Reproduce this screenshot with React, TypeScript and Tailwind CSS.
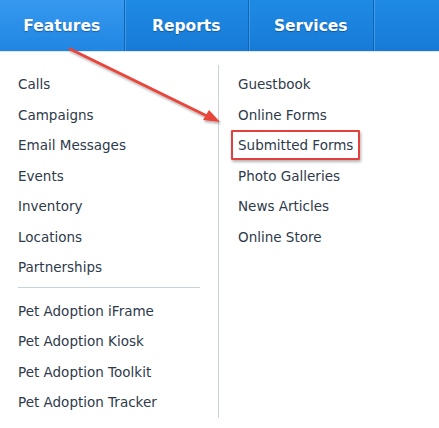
import React from "react";

const leftTop = ["Calls", "Campaigns", "Email Messages", "Events", "Inventory", "Locations", "Partnerships"];
const leftBottom = ["Pet Adoption iFrame", "Pet Adoption Kiosk", "Pet Adoption Toolkit", "Pet Adoption Tracker"];
const right = ["Guestbook", "Online Forms", "Submitted Forms", "Photo Galleries", "News Articles", "Online Store"];

const tabs = ["Features", "Reports", "Services"];

function Item({ label, boxed }: { label: string; boxed?: boolean }) {
  return (
    <li className="flex h-[30.5px] items-center">
      <span
        className={
          boxed
            ? "-ml-[7px] rounded-[1px] border-2 border-[#e2403c] px-[5px] py-[3px] shadow-[1px_2px_3px_rgba(0,0,0,0.3)]"
            : ""
        }
      >
        {label}
      </span>
    </li>
  );
}

export default function App() {
  return (
    <div
      className="relative h-[428px] w-[439px] overflow-hidden bg-white text-[13.5px] text-[#2e3a4b]"
      style={{ fontFamily: "Tahoma, 'DejaVu Sans', sans-serif" }}
    >
      <nav className="flex h-[52px] border-b border-[#dfe6ee] bg-[linear-gradient(180deg,#1f8ae4,#177bd6)]">
        {tabs.map((tab, i) => (
          <div
            key={tab}
            className={
              "flex w-[124.5px] items-center justify-center border-r border-r-[#0d67b8] pt-[3px] text-[15.5px] font-bold text-white [text-shadow:0_1px_1px_rgba(0,40,90,0.45)] " +
              (i === 0
                ? "bg-[linear-gradient(180deg,#3799ef,#1f86e2)]"
                : "shadow-[inset_1px_0_0_rgba(110,180,245,0.45)]")
            }
          >
            {tab}
          </div>
        ))}
        <div className="flex-1 shadow-[inset_1px_0_0_rgba(110,180,245,0.45)]" />
      </nav>

      <div className="flex pt-[13px]">
        <div className="w-[219px] border-r border-[#c9d1db] pl-[18px] pt-[4px]">
          <ul>
            {leftTop.map((l) => (
              <Item key={l} label={l} />
            ))}
          </ul>
          <div className="mb-[8px] mt-[4px] h-px w-[182px] bg-[#c9d1db]" />
          <ul>
            {leftBottom.map((l) => (
              <Item key={l} label={l} />
            ))}
          </ul>
        </div>
        <div className="pl-[19px] pt-[4px]">
          <ul>
            {right.map((l) => (
              <Item key={l} label={l} boxed={l === "Submitted Forms"} />
            ))}
          </ul>
        </div>
      </div>

      <svg className="pointer-events-none absolute left-0 top-0" width="439" height="428" aria-hidden="true">
        <defs>
          <filter id="arrow-shadow" x="-20%" y="-20%" width="140%" height="140%">
            <feDropShadow dx="1" dy="2" stdDeviation="1.2" floodColor="#000" floodOpacity="0.3" />
          </filter>
        </defs>
        <g filter="url(#arrow-shadow)">
          <line x1="70" y1="49" x2="209" y2="117" stroke="#e8443b" strokeWidth="3" strokeLinecap="round" />
          <polygon points="220,122 203,120 209,110" fill="#e8443b" />
        </g>
      </svg>
    </div>
  );
}
